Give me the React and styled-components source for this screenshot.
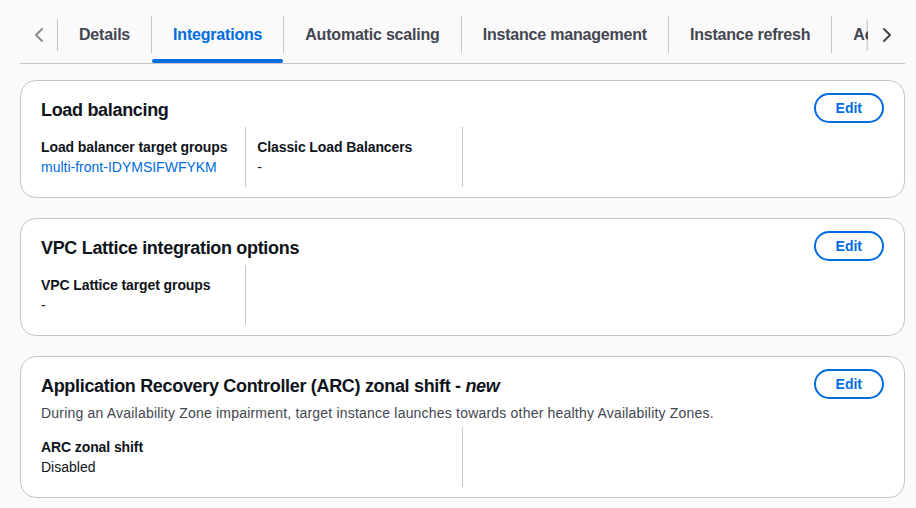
import React from 'react'
import styled, { createGlobalStyle } from 'styled-components'

const GlobalStyle = createGlobalStyle`
  html, body {
    margin: 0;
    padding: 0;
    background: #fafafa;
  }
  body {
    font-family: 'Liberation Sans', Arial, sans-serif;
    color: #0f141a;
    -webkit-font-smoothing: antialiased;
  }
`

const Page = styled.div`
  width: 916px;
  height: 508px;
  box-sizing: border-box;
  padding: 0 11px 0 20px;
  overflow: hidden;
`

const TabBar = styled.div`
  display: flex;
  height: 63px;
  border-bottom: 1px solid #c6c6cd;
`

const ScrollButton = styled.button`
  flex: 0 0 auto;
  width: ${props => (props.right ? '37px' : '38px')};
  height: 32px;
  margin-top: 19px;
  padding: 0;
  background: none;
  border: none;
  border-right: ${props => (props.right ? 'none' : '1px solid #c6c6cd')};
  box-shadow: ${props => (props.right ? '-2px 0 0 -0.5px rgba(180,180,188,0.6)' : 'none')};
  display: flex;
  align-items: center;
  justify-content: center;
  color: ${props => (props.disabled ? '#8c8c94' : '#424650')};
  cursor: pointer;
  svg {
    display: block;
  }
`

const TabScroller = styled.div`
  flex: 1 1 auto;
  display: flex;
  overflow: hidden;
  min-width: 0;
`

const Tab = styled.div`
  position: relative;
  flex: 0 0 auto;
  height: 63px;
  display: flex;
  flex-direction: column;
  &::after {
    content: '';
    display: ${props => (props.active ? 'block' : 'none')};
    position: absolute;
    left: 1px;
    right: 0;
    bottom: 0;
    height: 4px;
    border-radius: 2px;
    background: #006ce0;
  }
`

const TabLabel = styled.span`
  margin-top: 16px;
  height: 37px;
  box-sizing: border-box;
  padding: 1px 21px 0;
  display: flex;
  align-items: center;
  border-left: ${props => (props.first ? 'none' : '1px solid #c6c6cd')};
  font-size: 16px;
  line-height: 20px;
  font-weight: 700;
  letter-spacing: -0.2px;
  white-space: nowrap;
  color: ${props => (props.active ? '#006ce0' : '#424650')};
`

const Stack = styled.div`
  display: flex;
  flex-direction: column;
  gap: 20px;
  margin-top: 16px;
`

const Card = styled.section`
  background: #fff;
  border: 1px solid #c6c6cd;
  border-radius: 16px;
  padding: 12px 20px 10px;
`

const Header = styled.div`
  display: flex;
  align-items: flex-start;
  justify-content: space-between;
  padding-bottom: 4px;
`

const TitleBlock = styled.div`
  padding-top: 5px;
  display: flex;
  flex-direction: column;
  gap: 5px;
`

const Title = styled.h2`
  margin: 0;
  font-size: 18px;
  line-height: 24px;
  font-weight: 700;
  letter-spacing: -0.32px;
  color: #0f141a;
  em {
    font-style: italic;
  }
`

const Description = styled.p`
  margin: 0;
  font-size: 14px;
  line-height: 20px;
  letter-spacing: 0.2px;
  color: #424650;
`

const EditButton = styled.button`
  flex: 0 0 auto;
  height: 30px;
  padding: 0 20px;
  background: #fff;
  border: 2px solid #006ce0;
  border-radius: 20px;
  color: #006ce0;
  font-family: inherit;
  font-size: 14px;
  line-height: 20px;
  font-weight: 700;
  cursor: pointer;
`

const Columns = styled.div`
  display: grid;
  grid-template-columns: repeat(${props => props.count}, 1fr);
  margin: 0 -11px;
`

const Field = styled.div`
  padding: 10px 11px;
  border-right: 1px solid #c6c6cd;
  display: flex;
  flex-direction: column;
  font-size: 14px;
  line-height: 20px;
`

const Label = styled.div`
  font-weight: 700;
  letter-spacing: -0.1px;
  color: #0f141a;
`

const Value = styled.div`
  color: #0f141a;
`

const Link = styled.a`
  color: #006ce0;
  text-decoration: none;
`

const Chevron = ({ dir }) => (
  <svg width="16" height="16" viewBox="0 0 16 16" fill="none">
    <path
      d={dir === 'left' ? 'M11 2 5 8l6 6' : 'M5 2l6 6-6 6'}
      stroke="currentColor"
      strokeWidth="2"
      strokeLinecap="round"
      strokeLinejoin="round"
    />
  </svg>
)

const tabs = [
  'Details',
  'Integrations',
  'Automatic scaling',
  'Instance management',
  'Instance refresh',
  'Activity',
]

const Section = ({ title, description, columns = 4, children }) => (
  <Card>
    <Header>
      <TitleBlock>
        <Title>{title}</Title>
        {description && <Description>{description}</Description>}
      </TitleBlock>
      <EditButton>Edit</EditButton>
    </Header>
    <Columns count={columns}>{children}</Columns>
  </Card>
)

export default function App() {
  return (
    <Page>
      <GlobalStyle />
      <TabBar>
        <ScrollButton disabled aria-label="Scroll left">
          <Chevron dir="left" />
        </ScrollButton>
        <TabScroller>
          {tabs.map((t, i) => (
            <Tab key={t} active={t === 'Integrations'}>
              <TabLabel first={i === 0} active={t === 'Integrations'}>
                {t}
              </TabLabel>
            </Tab>
          ))}
        </TabScroller>
        <ScrollButton right aria-label="Scroll right">
          <Chevron dir="right" />
        </ScrollButton>
      </TabBar>

      <Stack>
        <Section title="Load balancing">
          <Field>
            <Label>Load balancer target groups</Label>
            <Value>
              <Link href="#">multi-front-IDYMSIFWFYKM</Link>
            </Value>
          </Field>
          <Field>
            <Label>Classic Load Balancers</Label>
            <Value>-</Value>
          </Field>
        </Section>

        <Section title="VPC Lattice integration options">
          <Field>
            <Label>VPC Lattice target groups</Label>
            <Value>-</Value>
          </Field>
        </Section>

        <Section
          columns={2}
          title={
            <>
              Application Recovery Controller (ARC) zonal shift - <em>new</em>
            </>
          }
          description="During an Availability Zone impairment, target instance launches towards other healthy Availability Zones."
        >
          <Field>
            <Label>ARC zonal shift</Label>
            <Value>Disabled</Value>
          </Field>
        </Section>
      </Stack>
    </Page>
  )
}
